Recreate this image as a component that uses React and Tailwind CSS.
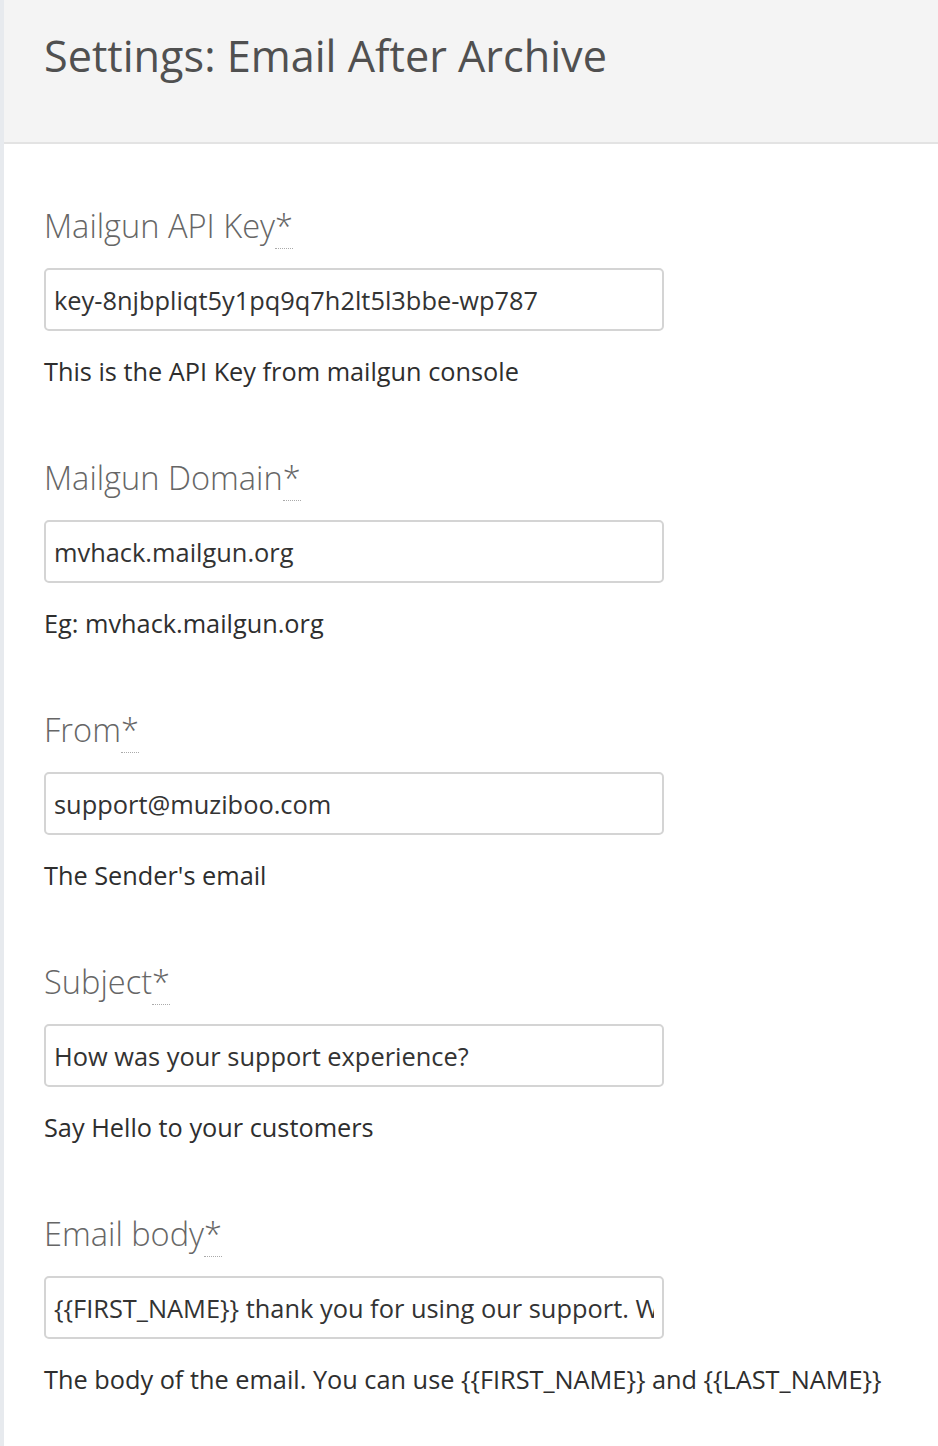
import { useState } from 'react'

const fields = [
  { label: 'Mailgun API Key', value: 'key-8njbpliqt5y1pq9q7h2lt5l3bbe-wp787', help: 'This is the API Key from mailgun console' },
  { label: 'Mailgun Domain', value: 'mvhack.mailgun.org', help: 'Eg: mvhack.mailgun.org' },
  { label: 'From', value: 'support@muziboo.com', help: "The Sender's email" },
  { label: 'Subject', value: 'How was your support experience?', help: 'Say Hello to your customers' },
  {
    label: 'Email body',
    value: '{{FIRST_NAME}} thank you for using our support. We hope your issue was resolved.',
    help: 'The body of the email. You can use {{FIRST_NAME}} and {{LAST_NAME}}',
  },
]

function Field({ label, value, help }) {
  const [val, setVal] = useState(value)
  return (
    <div className="mb-[70px]">
      <label className="block h-[40px] text-[32.6px] leading-[40px] font-light text-[#666] mb-[22px]">
        {label}
        <abbr title="required" className="no-underline border-b border-dotted border-[#aaa]">*</abbr>
      </label>
      <input
        type="text"
        value={val}
        onChange={e => setVal(e.target.value)}
        className="block w-[620px] h-[63px] px-[8px] border-2 border-[#d4d4d4] rounded-[5px] bg-white text-[25.4px] text-[#333] outline-none"
      />
      <p className="mt-[23px] h-[34px] leading-[34px] text-[25.3px] text-[#2e2e2e]">{help}</p>
    </div>
  )
}

export default function App() {
  return (
    <div className="min-h-[1446px] bg-white border-l-4 border-[#e7eaee]" style={{ fontFamily: '"Open Sans", "Noto Sans", sans-serif' }}>
      <div className="h-[144px] bg-[#f4f4f4] border-b-2 border-[#e3e3e3] px-10 flex items-center">
        <h1 className="text-[43.2px] text-[#505050] -mt-[30px]">Settings: Email After Archive</h1>
      </div>
      <div className="px-10 pt-[62px]">
        {fields.map(f => (
          <Field key={f.label} {...f} />
        ))}
      </div>
    </div>
  )
}
